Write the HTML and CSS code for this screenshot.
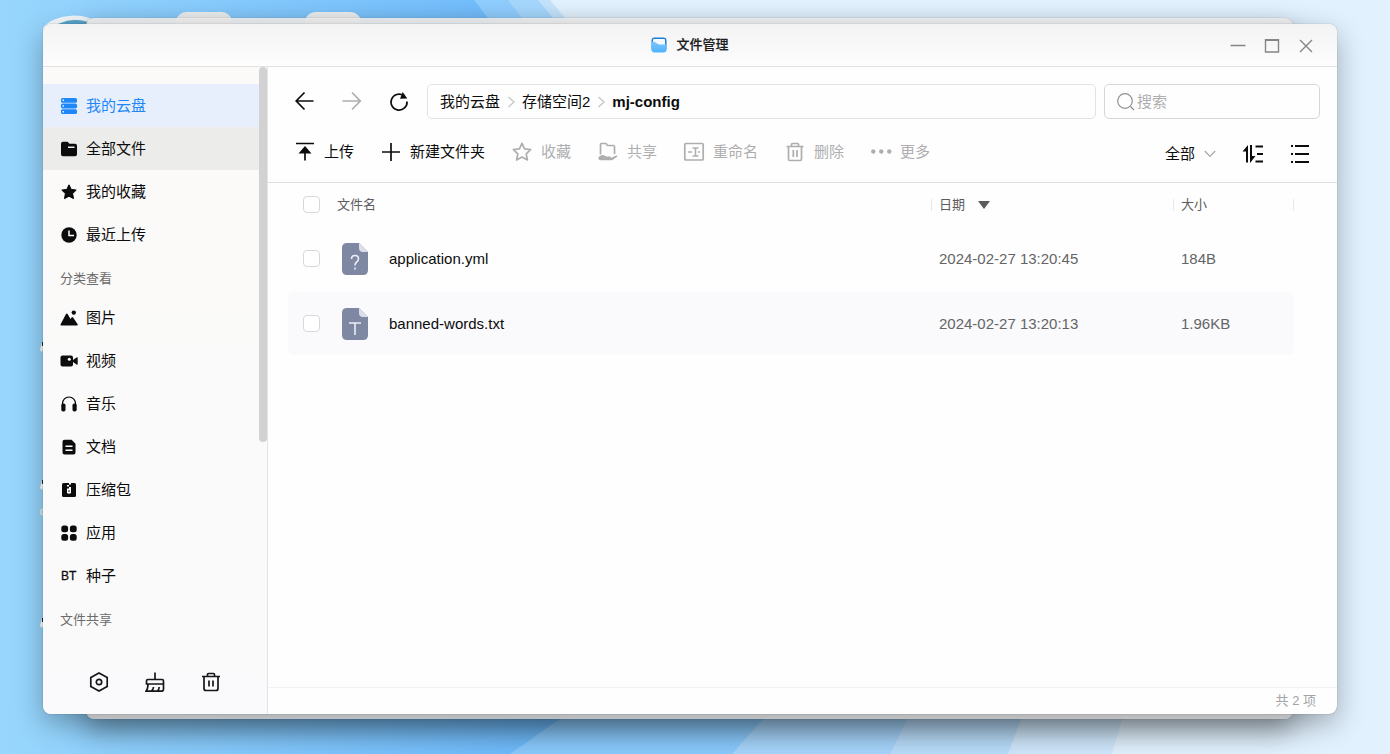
FILE: index.html
```html
<!DOCTYPE html>
<html lang="zh-CN">
<head>
<meta charset="utf-8">
<title>文件管理</title>
<meta name="viewport" content="width=device-width, initial-scale=1">
<link rel="stylesheet" href="styles.css">
</head>
<body class="desktop">
<svg class="wallpaper" viewBox="0 0 1390 754" preserveAspectRatio="none" aria-hidden="true">
  <defs>
    <linearGradient id="sky" x1="0" y1="0" x2="1" y2="0"><stop offset="0" stop-color="#98d6fc"/><stop offset=".18" stop-color="#84c9fd"/><stop offset=".4" stop-color="#6cb9fb"/></linearGradient>
  </defs>
  <path fill="url(#sky)" d="M0 0h1390v754H0z"/>
  <path fill="#8fcdfe" d="M474 0h916v377H763z"/>
  <path fill="#a5d7fd" d="M508 0h882v377H797z"/>
  <path fill="#c3e3fc" d="M538 0h852v377H854z"/>
  <path fill="#e1f1fe" d="M550 0h840v377H866z"/>
  <path fill="#8acafd" d="M574 709h300v45H510z"/>
  <path fill="#a6d5fc" d="M772 709h300v45H732z"/>
  <path fill="#b9ddfb" d="M913 709h300v45H890z"/>
  <path fill="#d0e8fc" d="M1025 709h200v45h-217z"/>
  <path fill="#e1f1fe" d="M1125 709h265v45h-278zM1200 377h190v342h-190z"/>
  <path fill="none" stroke="#f2f7fa" stroke-width="6" d="M45 30a32 20 0 0 1 56-2"/>
  <path fill="#5aa6cf" d="M57 25a24 14 0 0 1 31-3v6H57z"/>
  <path fill="#eef1f2" d="M176 30V20q3-8 11-8h34q8 0 11 8v10zM305 30V20q3-8 11-8h34q8 0 11 8v10z"/>
  <path fill="#fff" d="M40 350l2-8h2v5l-2 5zM40 488l2-8h2v5l-2 5zM40 626l2-8h2v5l-2 5z"/>
  <circle cx="44" cy="512" r="3" fill="none" stroke="#e4e9ec" stroke-width="2"/>
  <path fill="#222" d="M42 342h2v4h-2zM42 480h2v4h-2zM42 618h2v4h-2z"/>
</svg>
<div class="back-window"></div>

<div class="window">
  <header class="titlebar">
    <h1 class="title">
      <svg width="16" height="16" viewBox="0 0 16 16" aria-hidden="true"><defs><linearGradient id="app" x1="0" y1="0" x2="0" y2="1"><stop offset="0" stop-color="#7cc6fb"/><stop offset="1" stop-color="#4fb2ff"/></linearGradient></defs><rect x=".5" y=".5" width="15" height="14" rx="3" fill="#1b7fd8"/><path fill="#f4faff" d="M2 3q0-1 1-1h10q1 0 1 1v6H2z"/><path fill="url(#app)" d="M.5 5q3-.6 5 1T9 7.500h6.500v5q0 3-3 3h-9q-3 0-3-3z"/></svg>
      <span>文件管理</span>
    </h1>
    <div class="window-controls">
      <button type="button" aria-label="最小化"><svg width="16" height="16" viewBox="0 0 16 16"><path d="M.5 8.500h15"/></svg></button>
      <button type="button" aria-label="最大化"><svg width="16" height="16" viewBox="0 0 16 16"><path d="M1.500 2v13h13V2"/><path stroke-width="2" d="M1 3h14"/></svg></button>
      <button type="button" aria-label="关闭"><svg width="16" height="16" viewBox="0 0 16 16"><path d="M2 3l12 12M14 3L2 15"/></svg></button>
    </div>
  </header>

  <div class="body">
    <aside class="sidebar">
      <div class="scroll">
        <nav class="nav">
          <a href="#" class="item active"><svg viewBox="0 0 16 16"><rect x="0" y="0" width="16" height="4.800" rx="1.600"/><rect x="0" y="5.600" width="16" height="4.800" rx="1.600"/><rect x="0" y="11.200" width="16" height="4.800" rx="1.600"/><path fill="#e8f0fd" d="M1.500 1.600H3v1.400H1.500zM1.500 7.300H3v1.400H1.500zM1.500 13H3v1.400H1.500z"/></svg>我的云盘</a>
          <a href="#" class="item hover"><svg viewBox="0 0 16 16"><path d="M2 .8h4.500l2 2H14q2 0 2 2v8.400q0 2-2 2H2q-2 0-2-2V2.800q0-2 2-2z"/><path fill="#ececeb" d="M7 5.500h6.500v1.400H7z"/></svg>全部文件</a>
          <a href="#" class="item"><svg viewBox="0 0 16 16"><path stroke="#000" stroke-linejoin="round" d="M8 .8l2.200 4.600 5 .7-3.600 3.500.9 5L8 12.200l-4.500 2.400.9-5L.8 6.100l5-.7z"/></svg>我的收藏</a>
          <a href="#" class="item"><svg viewBox="0 0 16 16"><circle cx="8" cy="8" r="7.700"/><path fill="none" stroke="#fff" stroke-width="1.500" d="M8 3.500v5h5"/></svg>最近上传</a>
          <h2 class="group">分类查看</h2>
          <a href="#" class="item"><svg viewBox="0 0 16 16"><circle cx="12.800" cy="2.600" r="2.200"/><path d="M-.5 14.500L5 4q.8-1.200 1.600 0L9.500 9l1-1.600q.8-1 1.600 0L16.800 14.500q0 1-.8 1H.3q-1 0-.8-1z"/></svg>图片</a>
          <a href="#" class="item"><svg viewBox="0 0 16 16"><rect x="-.5" y="2.500" width="12.500" height="11" rx="2"/><path d="M12 7l3.500-2.500q1.200-.6 1.200.5v6q0 1.100-1.200.5L12 9z"/><circle cx="8.300" cy="6.300" r="1.500" fill="#fff"/></svg>视频</a>
          <a href="#" class="item"><svg viewBox="0 0 16 16"><path fill="none" stroke="#000" stroke-width="1.200" d="M1.500 10V7.500a6.500 6.500 0 0 1 13 0V10"/><rect x=".3" y="7.500" width="4.200" height="8" rx="1.700"/><rect x="11.500" y="7.500" width="4.200" height="8" rx="1.700"/></svg>音乐</a>
          <a href="#" class="item"><svg viewBox="0 0 16 16"><path d="M3.500.8h7l4 4v8.700q0 2-2 2h-9q-2 0-2-2V2.800q0-2 2-2z"/><path fill="none" stroke="#fff" stroke-width="1.500" d="M4.500 7.300h7M4.500 11.200h7"/></svg>文档</a>
          <a href="#" class="item"><svg viewBox="0 0 16 16"><rect x="1" y="1" width="14" height="14" rx="1.500"/><path fill="#fff" d="M8 1h2v1.600H8zM6 3h2v1.600H6zM8 5h2v1.600H8zM6 6.500h4v4.600q-2 1.500-4 0z"/><path d="M7.500 8.200h1v1.800h-1z"/></svg>压缩包</a>
          <a href="#" class="item"><svg viewBox="0 0 16 16"><rect x=".3" y=".5" width="6.800" height="6.800" rx="2.500"/><rect x="8.900" y=".5" width="6.800" height="6.800" rx="2.500"/><rect x=".3" y="8.900" width="6.800" height="6.800" rx="2.500"/><rect x="8.900" y="8.900" width="6.800" height="6.800" rx="2.500"/></svg>应用</a>
          <a href="#" class="item"><span class="bt">BT</span>种子</a>
          <h2 class="group">文件共享</h2>
        </nav>
        <div class="track"><div class="thumb"></div></div>
      </div>
      <div class="side-tools">
        <button type="button" aria-label="设置"><svg viewBox="0 0 20 20"><path d="M10 1l8.200 4.500v9L10 19l-8.200-4.500v-9z"/><circle cx="10" cy="10" r="2.700"/></svg></button>
        <button type="button" aria-label="清理"><svg viewBox="0 0 20 20"><path d="M10 .5v7M1.500 12V9q0-1.500 1.500-1.500h14q1.500 0 1.500 1.500v3zM3 12q0 5-2 7.200h15.500q2 0 2-2V12M6.500 19q1.800-1.500 2-4M12.500 19q1.500-1.500 1.700-4"/></svg></button>
        <button type="button" aria-label="回收站"><svg viewBox="0 0 20 20"><path d="M1 4.500h18M3 4.500v12q0 2 2 2h10q2 0 2-2v-12M6.500 4.500V2.500q0-1 1-1h5q1 0 1 1v2M8 8.500v6M12 8.500v6"/></svg></button>
      </div>
    </aside>

    <main class="main">
      <div class="pathbar">
        <div class="history">
          <button type="button" aria-label="后退"><svg class="ico" viewBox="0 0 20 20"><path d="M18.500 9H1.500M9.500.500L1.200 9l8.300 8.500"/></svg></button>
          <button type="button" aria-label="前进" disabled><svg class="ico" viewBox="0 0 20 20"><path d="M.5 9h17.500M10 .5L18.300 9 10 17.500"/></svg></button>
          <button type="button" aria-label="刷新"><svg class="ico" viewBox="0 0 20 20"><path d="M14.500 3.500A8 8 0 1 0 18 9.500"/><path class="solid" d="M13.700 0l4.600 6.500-7.300.2z"/></svg></button>
        </div>
        <nav class="crumbs" aria-label="路径">
          <a href="#">我的云盘</a>
          <svg viewBox="0 0 8 12"><path d="M1.500 1L7 6l-5.500 5"/></svg>
          <a href="#">存储空间2</a>
          <svg viewBox="0 0 8 12"><path d="M1.500 1L7 6l-5.500 5"/></svg>
          <a href="#" class="current" aria-current="page">mj-config</a>
        </nav>
        <label class="search">
          <svg width="18" height="18" viewBox="0 0 18 18" aria-hidden="true"><circle cx="8" cy="8" r="7.300"/><path d="M13.500 13.500l3.500 3.500"/></svg>
          <input type="search" placeholder="搜索" aria-label="搜索">
        </label>
      </div>

      <div class="toolbar">
        <div class="actions">
          <button type="button"><svg class="ico" viewBox="0 0 20 20"><path d="M1 1.500h18M10 18.500V8"/><path class="solid" d="M10 4l6.500 7.500h-13z"/></svg>上传</button>
          <button type="button"><svg class="ico" viewBox="0 0 20 20"><path d="M10 1v18M1 10h18"/></svg>新建文件夹</button>
          <button type="button" disabled><svg class="ico" viewBox="0 0 20 20"><path stroke-linejoin="round" d="M10 1.300l2.600 5.500 6 .8-4.400 4.200 1.200 6.200-5.400-3-5.400 3 1.200-6.200-4.400-4.200 6-.8z"/></svg>收藏</button>
          <button type="button" disabled><svg class="ico" viewBox="0 0 20 20"><path d="M2.500 12.500V2.500q0-1 1-1H8l1.500 2h6q1 0 1 1V12"/><path class="solid" d="M.5 15q3.500-3 6-1.500l2 1h4q1.500.8-.3 1.500H8l5 .1 5-2.600q2.500-.5.8 1.500L14 18.300H2.500Q.5 18 .5 17z"/></svg>共享</button>
          <button type="button" disabled><svg class="ico" viewBox="0 0 20 20"><rect x=".8" y="1.500" width="18.400" height="16.500" rx="1"/><path stroke-width="1.600" d="M8.500 6h6M8.500 14h6M11.500 6v8M4 10h4M14 10h2"/></svg>重命名</button>
          <button type="button" disabled><svg class="ico" viewBox="0 0 20 20"><path d="M1.500 4.500h17M3.500 4.500V17q0 1.500 1.500 1.500h10q1.500 0 1.500-1.500V4.500M6.500 4.500V2.500q0-1 1-1h5q1 0 1 1v2M8.300 8v7M12 8v7"/></svg>删除</button>
          <button type="button" disabled><svg class="ico" viewBox="0 0 20 20"><g class="solid"><circle cx="2.300" cy="9.500" r="2.200"/><circle cx="10.300" cy="9.500" r="2.200"/><circle cx="18.300" cy="9.500" r="2.200"/></g></svg>更多</button>
        </div>
        <div class="view">
          <label class="filter">
            <select aria-label="筛选"><option>全部</option></select>
            <svg width="12" height="8" viewBox="0 0 12 8" aria-hidden="true"><path d="M.8 1L6 6.500 11.200 1"/></svg>
          </label>
          <button type="button" aria-label="排序"><svg class="ico" viewBox="0 0 20 20"><path stroke-width="2" d="M4 18.500V3M8 1v16M12.500 2.500h7.500M14 10h6M12.500 17.500h7.500"/><path class="solid" d="M5 1v6.500H-.5zM7 19v-7h5.500z"/></svg></button>
          <button type="button" aria-label="列表视图"><svg class="ico" viewBox="0 0 20 20"><path stroke-width="2" d="M5 2h14M5 10h14M5 18h14M1 2h2M1 10h2M1 18h2"/></svg></button>
        </div>
      </div>

      <div class="files">
        <table>
          <colgroup><col class="c-check"><col class="c-name"><col class="c-date"><col class="c-size"></colgroup>
          <thead>
            <tr>
              <th class="check"><input type="checkbox" aria-label="全选"></th>
              <th>文件名</th>
              <th class="split">日期 <svg class="sort" width="12" height="8" viewBox="0 0 12 8"><path d="M0 0h12L6 8z"/></svg></th>
              <th class="split last">大小</th>
            </tr>
          </thead>
          <tbody>
            <tr>
              <td class="check"><input type="checkbox" aria-label="application.yml"></td>
              <td><div class="file"><svg width="28" height="34" viewBox="0 0 28 34"><path fill="#7f88a3" d="M6 1h12l9 9v18q0 5-5 5H6q-5 0-5-5V6q0-5 5-5z"/><path fill="#dcdeea" d="M18 1l9 9h-5q-4 0-4-4z"/><path class="mark" d="M10.500 17q0-3.500 3.500-3.500t3.500 3.300q0 2-1.800 3.200-1.700 1.300-1.700 3.500M14 25.500v2"/></svg>application.yml</div></td>
              <td class="meta">2024-02-27 13:20:45</td>
              <td class="meta">184B</td>
            </tr>
            <tr class="hover">
              <td class="check"><input type="checkbox" aria-label="banned-words.txt"></td>
              <td><div class="file"><svg width="28" height="34" viewBox="0 0 28 34"><path fill="#7f88a3" d="M6 1h12l9 9v18q0 5-5 5H6q-5 0-5-5V6q0-5 5-5z"/><path fill="#dcdeea" d="M18 1l9 9h-5q-4 0-4-4z"/><path class="mark" d="M8 16h12M14 16v12"/></svg>banned-words.txt</div></td>
              <td class="meta">2024-02-27 13:20:13</td>
              <td class="meta">1.96KB</td>
            </tr>
          </tbody>
        </table>
      </div>

      <footer class="status">共 2 项</footer>
    </main>
  </div>
</div>
</body>
</html>
```
FILE: styles.css
```css
* { box-sizing: border-box; }

button, input, select {
  font: inherit;
  color: inherit;
  border: 0;
  background: none;
  padding: 0;
  margin: 0;
}

a { color: inherit; text-decoration: none; }

.desktop {
  position: relative;
  display: flex;
  min-height: 100vh;
  margin: 0;
  padding: 24px 53px 40px 43px;
  font: 15px/20px "Liberation Sans", "Noto Sans CJK SC", sans-serif;
  color: #0c0c0c;
}

.wallpaper {
  position: absolute;
  inset: 0;
  width: 100%;
  height: 100%;
}

.back-window {
  position: absolute;
  inset: 18px 97px 35px 86px;
  border-radius: 8px;
  background: rgba(238, 238, 239, .96);
  box-shadow: 0 0 1px rgba(0, 0, 0, .4), 0 12px 28px rgba(0, 0, 0, .36);
}

.window {
  position: relative;
  flex: 1;
  display: flex;
  flex-direction: column;
  min-width: 0;
  overflow: hidden;
  border-radius: 8px;
  background: #fefefe;
  box-shadow: 0 0 1px rgba(0, 0, 0, .5), 0 10px 28px rgba(0, 0, 0, .3);
}

/* Title bar */
.titlebar {
  display: grid;
  grid-template-columns: 1fr auto 1fr;
  align-items: center;
  height: 43px;
  border-bottom: 1px solid #e2e2e4;
  background: linear-gradient(#f3f3f4, #fefdfe);
}

.title {
  grid-column: 2;
  display: flex;
  align-items: center;
  gap: 9px;
  margin: 0;
  font-size: 13px;
  font-weight: 500;
  color: #1c1c1e;
  -webkit-text-stroke: 0.2px;
}

.window-controls {
  display: flex;
  justify-content: flex-end;
  gap: 18px;
  padding-right: 23px;
}

.window-controls button { display: flex; }

.window-controls svg {
  fill: none;
  stroke: #858587;
  stroke-width: 1.4;
}

.body { flex: 1; display: flex; min-height: 0; }

/* Sidebar */
.sidebar {
  flex: none;
  display: flex;
  flex-direction: column;
  width: 225px;
  border-right: 1px solid #e4e4e6;
  background: linear-gradient(#fbfaf9, #fbfafa 75%, #faf9fb);
}

.scroll { flex: 1; display: flex; }

.nav { flex: 1; padding-top: 17px; }

.item {
  display: flex;
  align-items: center;
  gap: 9px;
  height: 43px;
  padding-left: 18px;
}

.item svg {
  width: 16px;
  height: 16px;
  overflow: visible;
  fill: currentColor;
}

.item.active { color: #1e88f8; background: #e7effc; }
.item.hover { background: #ececeb; }

.bt {
  width: 16px;
  font-size: 12px;
  -webkit-text-stroke: 0.3px;
}

.group {
  height: 40px;
  margin: 0;
  padding-left: 17px;
  font-size: 13px;
  line-height: 46px;
  font-weight: 400;
  color: #6b6b6b;
}

.track { width: 8px; }

.thumb {
  height: 375px;
  border-radius: 4px;
  background: #d3d2d3;
}

.side-tools {
  display: flex;
  gap: 36px;
  padding: 0 46px 22px;
}

.side-tools button { display: flex; }

.side-tools svg {
  width: 20px;
  height: 20px;
  fill: none;
  stroke: #161618;
  stroke-width: 1.7;
}

/* Path bar */
.main { flex: 1; display: flex; flex-direction: column; min-width: 0; }

.ico {
  width: 20px;
  height: 20px;
  overflow: visible;
  fill: none;
  stroke: currentColor;
  stroke-width: 1.7;
}

.ico .solid { fill: currentColor; stroke: none; }

button:disabled { color: #aeaeb0; }

.pathbar {
  display: flex;
  align-items: center;
  padding: 17px 17px 0 27px;
}

.history { display: flex; gap: 27px; padding-right: 18px; }
.history button { display: flex; }

.crumbs {
  flex: 1;
  display: flex;
  align-items: center;
  gap: 7px;
  height: 35px;
  margin-right: 8px;
  padding: 0 12px;
  border: 1px solid #e2e2e3;
  border-radius: 5px;
}

.crumbs svg {
  width: 8px;
  height: 12px;
  fill: none;
  stroke: #c6c6c8;
  stroke-width: 1.3;
}

.current { font-weight: 700; }

.search {
  display: flex;
  align-items: center;
  gap: 2px;
  width: 216px;
  height: 35px;
  padding: 0 12px;
  border: 1px solid #d6d6d8;
  border-radius: 5px;
}

.search svg { overflow: visible; fill: none; stroke: #8f8f91; stroke-width: 1.2; }
.search input { flex: 1; min-width: 0; outline: 0; }
.search input::placeholder { color: #aeaeb0; opacity: 1; }

/* Toolbar */
.toolbar {
  display: flex;
  align-items: center;
  justify-content: space-between;
  height: 64px;
  padding: 2px 27px 0 27px;
  border-bottom: 1px solid #dfdfe1;
}

.actions { display: flex; gap: 27px; }

.actions button {
  display: flex;
  align-items: center;
  gap: 9px;
  white-space: nowrap;
}

.view { display: flex; align-items: center; gap: 27px; padding-top: 4px; }
.view button { display: flex; }

.filter { display: flex; align-items: center; gap: 9px; }
.filter select { width: 30px; appearance: none; }
.filter svg { fill: none; stroke: #a5a5a7; stroke-width: 1.2; }

/* File list */
.files { flex: 1; padding: 0 43px 0 20px; }

table {
  width: 100%;
  table-layout: fixed;
  border-collapse: separate;
  border-spacing: 0;
}

.c-check { width: 49px; }
.c-date { width: 242px; }
.c-size { width: 121px; }

th {
  height: 43px;
  padding: 0;
  font-size: 13px;
  font-weight: 400;
  text-align: left;
  color: #5c5c5e;
}

.split {
  padding-left: 8px;
  background: linear-gradient(#e8e8ea, #e8e8ea) left / 1px 12px no-repeat;
}

.split.last {
  background: linear-gradient(#e8e8ea, #e8e8ea) left / 1px 12px no-repeat, linear-gradient(#e8e8ea, #e8e8ea) right / 1px 12px no-repeat;
}

.sort { margin-left: 9px; fill: #5c5c5e; }

td {
  height: 65px;
  padding: 0;
  border: solid transparent;
  border-width: 1px 0;
  background-clip: padding-box;
}

.check { padding-left: 15px; }

input[type="checkbox"] {
  display: block;
  appearance: none;
  width: 17px;
  height: 17px;
  border: 1px solid #d8d8da;
  border-radius: 4px;
  background: #fff;
}

.file { display: flex; align-items: center; gap: 20px; padding-left: 4px; }

.mark { fill: none; stroke: #eceef5; stroke-width: 1.6; }

.meta { padding-left: 8px; color: #656567; }

tr.hover td { background-color: #faf9fc; }
tr.hover td:first-child { border-radius: 6px 0 0 6px; }
tr.hover td:last-child { border-radius: 0 6px 6px 0; }

.status {
  height: 27px;
  padding-right: 21px;
  border-top: 1px solid #f1f1f2;
  font-size: 13px;
  line-height: 26px;
  text-align: right;
  color: #a3a3a8;
}
```
